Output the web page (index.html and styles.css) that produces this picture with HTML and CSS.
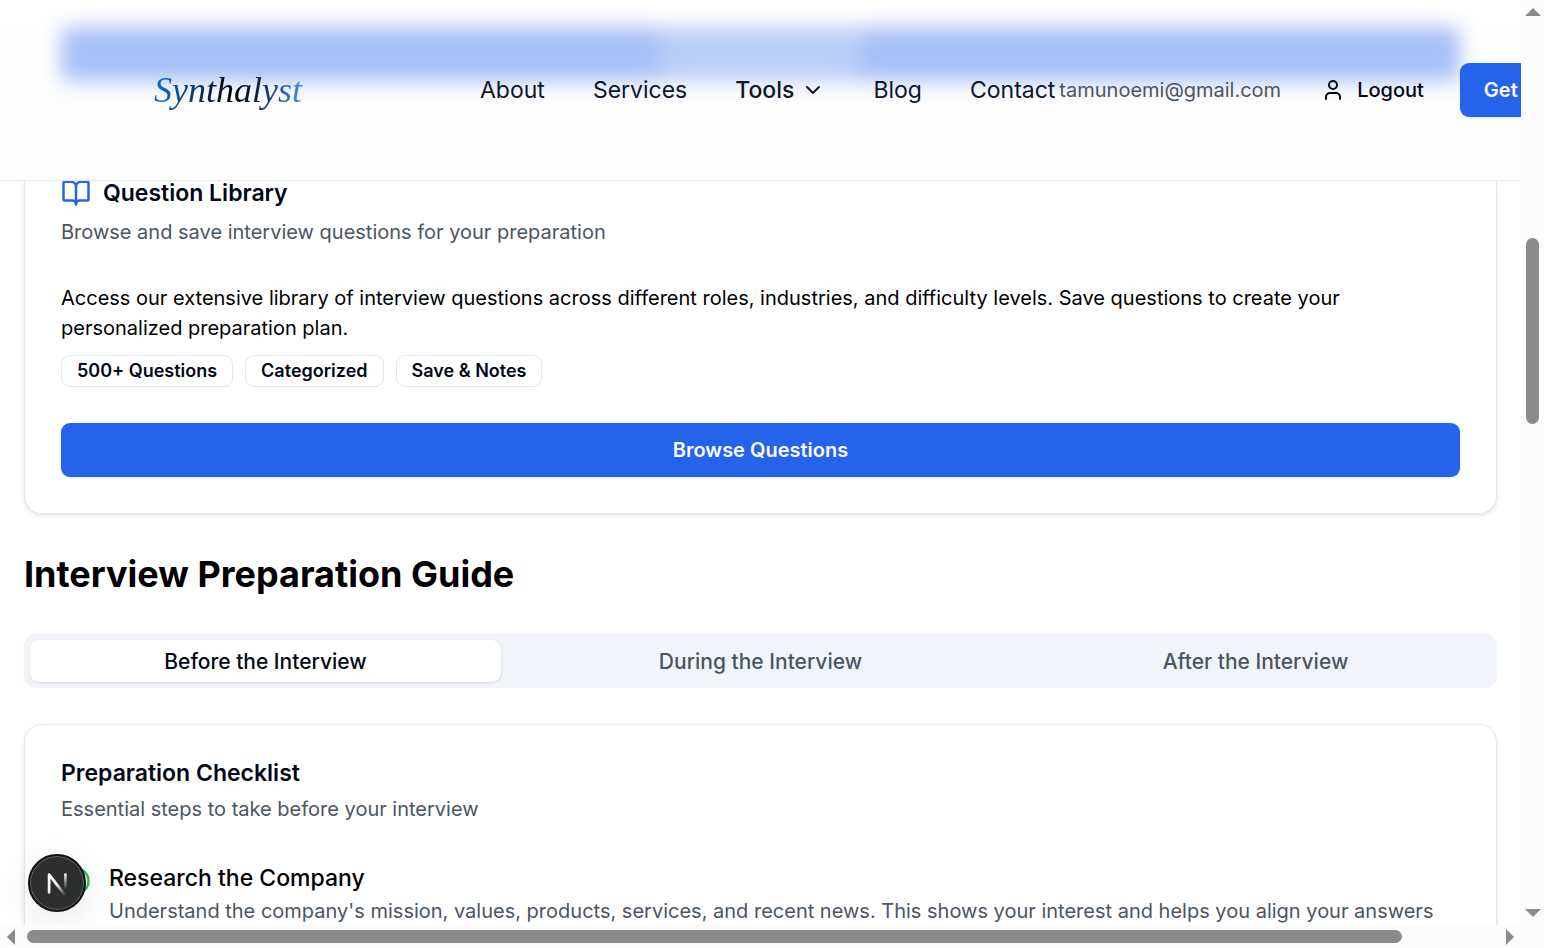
FILE: index.html
```html
<!DOCTYPE html>
<html lang="en">
<head>
<meta charset="utf-8">
<title>Synthalyst</title>
<meta name="viewport" content="width=device-width, initial-scale=1">
<link rel="stylesheet" href="styles.css">
</head>
<body>
<div class="window">
  <div class="page">
    <header class="header">
      <a class="logo" href="#">Synthalyst</a>
      <nav class="nav">
        <a class="nav-link" href="#">About</a>
        <a class="nav-link" href="#">Services</a>
        <button class="nav-link nav-tools" type="button">Tools
          <svg class="chevron" viewBox="0 0 24 24"><path d="m6 9 6 6 6-6"/></svg>
        </button>
        <a class="nav-link" href="#">Blog</a>
        <a class="nav-link" href="#">Contact</a>
      </nav>
      <div class="account">
        <span class="email">tamunoemi@gmail.com</span>
        <button class="logout" type="button">
          <svg class="user" viewBox="0 0 24 24"><path d="M19 21v-2a4 4 0 0 0-4-4H9a4 4 0 0 0-4 4v2"/><circle cx="12" cy="7" r="4"/></svg>
          Logout
        </button>
        <button class="btn" type="button">Get Started</button>
      </div>
    </header>
    <main class="content">
      <section class="card card-library">
        <h3 class="card-title">
          <svg class="book" viewBox="0 0 24 24"><path d="M12 7v14"/><path d="M3 18a1 1 0 0 1-1-1V4a1 1 0 0 1 1-1h5a4 4 0 0 1 4 4 4 4 0 0 1 4-4h5a1 1 0 0 1 1 1v13a1 1 0 0 1-1 1h-6a3 3 0 0 0-3 3 3 3 0 0 0-3-3z"/></svg>
          Question Library
        </h3>
        <p class="muted">Browse and save interview questions for your preparation</p>
        <p class="body-text">Access our extensive library of interview questions across different roles, industries, and difficulty levels. Save questions to create your personalized preparation plan.</p>
        <div class="badges">
          <span class="badge">500+ Questions</span>
          <span class="badge">Categorized</span>
          <span class="badge">Save &amp; Notes</span>
        </div>
        <button class="btn" type="button">Browse Questions</button>
      </section>
      <h2 class="heading">Interview Preparation Guide</h2>
      <div class="tabs" role="tablist">
        <button class="tab tab-active" type="button" role="tab" aria-selected="true">Before the Interview</button>
        <button class="tab" type="button" role="tab" aria-selected="false">During the Interview</button>
        <button class="tab" type="button" role="tab" aria-selected="false">After the Interview</button>
      </div>
      <section class="card card-checklist">
        <h3 class="card-title">Preparation Checklist</h3>
        <p class="muted">Essential steps to take before your interview</p>
        <div class="item">
          <svg class="check" viewBox="0 0 24 24"><circle cx="12" cy="12" r="10"/><path d="m9 12 2 2 4-4"/></svg>
          <div class="item-text">
            <h4 class="item-title">Research the Company</h4>
            <p class="muted">Understand the company's mission, values, products, services, and recent news. This shows your interest and helps you align your answers</p>
          </div>
        </div>
      </section>
    </main>
    <button class="dev-badge" type="button" aria-label="Developer tools">
      <svg class="dev-mark" viewBox="0 2 40 40">
        <defs>
          <linearGradient id="diag" x1="20" y1="22" x2="29" y2="33" gradientUnits="userSpaceOnUse"><stop stop-color="#fff"/><stop offset="1" stop-color="#fff" stop-opacity="0"/></linearGradient>
          <linearGradient id="stem" x1="27" y1="12" x2="27" y2="28" gradientUnits="userSpaceOnUse"><stop stop-color="#fff"/><stop offset="1" stop-color="#fff" stop-opacity="0"/></linearGradient>
        </defs>
        <path d="M12.5 31V14L28 34" fill="none" stroke="url(#diag)" stroke-width="2.600"/>
        <path d="M28 14v15" fill="none" stroke="url(#stem)" stroke-width="2.600"/>
      </svg>
    </button>
  </div>
  <div class="bar bar-y"><i class="arrow up"></i><div class="track"><div class="thumb"></div></div><i class="arrow down"></i></div>
  <div class="bar bar-x"><i class="arrow left"></i><div class="track"><div class="thumb"></div></div><i class="arrow right"></i></div>
</div>
</body>
</html>
```
FILE: styles.css
```css
* { box-sizing: border-box; }
body, h2, h3, h4, p { margin: 0; }
body { font-family: Inter, "Liberation Sans", sans-serif; font-size: 20px; color: #020817; background: #fff; }
button { font: inherit; color: inherit; border: 0; background: none; padding: 0; }
a { color: inherit; text-decoration: none; }
svg { fill: none; stroke: currentColor; stroke-width: 2; stroke-linecap: round; stroke-linejoin: round; flex: none; }

.window { display: grid; grid-template: minmax(0, 1fr) 23px / minmax(0, 1fr) 23px; height: 100vh; overflow: hidden; background: #fcfcfc; }
.page { position: relative; overflow: hidden; background: #fff; }

.header { position: relative; display: flex; align-items: center; height: 181px; padding-left: 154px; border-bottom: 1px solid #e2e8f0; white-space: nowrap; overflow: hidden; background: linear-gradient(#fff, #fdfdfd 100px, #fefefe 140px); }
.header::before { content: ""; position: absolute; left: 61px; right: 61px; top: 27px; height: 54px; border-radius: 9px; background: linear-gradient(90deg, transparent calc(50% - 110px), #ffffff3c calc(50% - 90px), #ffffff3c calc(50% + 90px), transparent calc(50% + 110px)), #2563eb; opacity: .4; filter: blur(10px); }
.header > * { position: relative; }
.logo { width: 326px; flex: none; font: italic 36px/60px "Liberation Serif", serif; color: transparent; background: linear-gradient(90deg, #0b6fe0, #0b1d35 60px, #000 76px, #0b1d35 100px, #4f8ff5 150px); -webkit-background-clip: text; background-clip: text; }
.nav { display: flex; gap: 48px; font-size: 23px; color: #0f172a; }
.nav-link { flex: none; }
.nav-tools { display: flex; align-items: center; gap: 7px; font-weight: 500; }
.chevron { width: 24px; height: 24px; }
.account { display: flex; align-items: center; padding-left: 4px; }
.email { color: #4b5563; }
.logout { display: flex; align-items: center; gap: 12px; padding: 0 36px 0 40px; font-weight: 500; }
.user { width: 24px; height: 24px; }
.btn { height: 54px; padding: 0 24px; border-radius: 9px; background: #2563eb; color: #f8fafc; font-weight: 600; box-shadow: 0 1px 3px #0000001a; }

.content { display: flex; flex-direction: column; padding: 0 24px; }
.card { display: flex; flex-direction: column; padding: 36px; border: 1px solid #e2e8f0; border-radius: 18px; box-shadow: 0 2px 4px #0000001a; background: #fff; }
.card-library { border-top: 0; border-radius: 0 0 18px 18px; padding-top: 0; }
.card-title { display: flex; align-items: center; gap: 12px; height: 24px; font-size: 23px; font-weight: 600; }
.book { width: 30px; height: 30px; color: #2563eb; }
.muted { color: #4b5563; line-height: 30px; }
.card-library .card-title { margin-bottom: 12px; }
.card-checklist .card-title { margin-bottom: 9px; }
.body-text { margin-top: 36px; line-height: 30px; color: #000; }
.badges { display: flex; gap: 12px; margin: 12px 0 36px; }
.badge { padding: 0 15px; border: 1px solid #e2e8f0; border-radius: 9px; font-size: 18px; line-height: 30px; font-weight: 600; }
.heading { margin: 36px 0; font-size: 36px; line-height: 48px; font-weight: 700; color: #000; }
.tabs { display: grid; grid-template-columns: repeat(3, 1fr); gap: 24px; height: 54px; padding: 6px; border-radius: 12px; background: #f1f5f9; color: #4b5563; font-size: 21px; font-weight: 500; }
.tab-active { border-radius: 9px; background: #fff; color: #020817; box-shadow: 0 1px 3px #0000001f; }
.card-checklist { margin-top: 36px; }
.item { display: flex; gap: 18px; margin-top: 36px; }
.check { width: 30px; height: 30px; color: #22c55e; margin-top: 6px; }
.item-title { font-size: 23px; line-height: 36px; font-weight: 500; color: #000; }

.dev-badge { position: absolute; left: 28px; bottom: 13px; width: 58px; height: 58px; border-radius: 50%; background: #2d2f2f; border: 2px solid #111; box-shadow: inset 0 0 0 1px #666, 0 9px 36px #00000018; display: grid; place-items: center; }
.dev-mark { width: 42px; height: 42px; }

.bar { display: flex; align-items: center; }
.bar-y { flex-direction: column; padding: 8px 0; }
.bar-x { padding: 0 7px; }
.track { flex: 1; position: relative; align-self: stretch; }
.thumb { position: absolute; background: #8b8b8b; border-radius: 7px; }
.bar-y .thumb { left: 5px; width: 13px; top: 222px; height: 186px; }
.bar-x .thumb { top: 5px; height: 13px; left: 12px; right: 104px; }
.arrow { border: 8px solid transparent; }
.up { border-top: 0; border-bottom-color: #8b8b8b; }
.down { border-bottom: 0; border-top-color: #8b8b8b; }
.left { border-left: 0; border-right-color: #8b8b8b; }
.right { border-right: 0; border-left-color: #8b8b8b; }
```
